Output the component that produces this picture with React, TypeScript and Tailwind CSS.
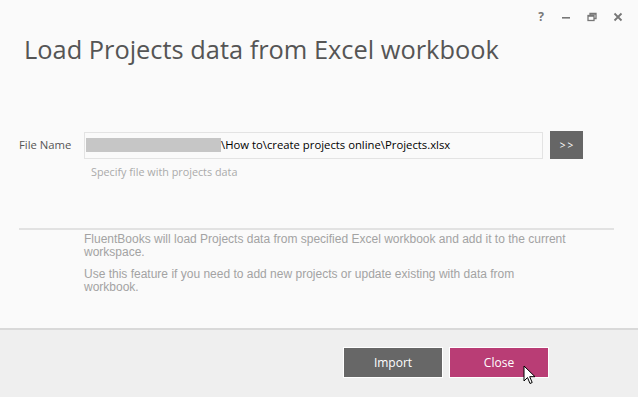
import React from "react";

export default function App() {
  return (
    <div className="w-[638px] h-[397px] flex flex-col bg-[#fafafa] overflow-hidden relative" style={{ fontFamily: '"Open Sans", sans-serif' }}>
      <div className="flex-1 flex flex-col relative">
        {/* window controls */}
        <div className="absolute top-[11px] right-[14px] flex items-center gap-[14px] text-[#777]">
          <span className="text-[12px] font-bold leading-none w-[10px] text-center">?</span>
          <svg width="12" height="12" viewBox="0 0 12 12"><rect x="2" y="6" width="8" height="1.6" fill="#777" /></svg>
          <svg width="12" height="12" viewBox="0 0 12 12" fill="none" stroke="#777" strokeWidth="1.3">
            <rect x="2" y="4.5" width="6" height="5" />
            <path d="M4 4.5V2.5h6v5H8" />
            <path d="M2 5.2h6M4 3.1h6" />
          </svg>
          <svg width="12" height="12" viewBox="0 0 12 12" stroke="#777" strokeWidth="1.8"><path d="M2.5 2.5l7 7M9.5 2.5l-7 7" /></svg>
        </div>
        <h1 className="pl-[24px] pt-[33px] text-[25.4px] leading-[32px] text-[#555] font-normal">
          Load Projects data from Excel workbook
        </h1>
        <div className="mt-[66px] flex items-center">
          <div className="w-[84px] pl-[19px] text-[11.3px] text-[#555]">File Name</div>
          <div className="w-[459px] h-[27px] border border-[#e3e3e3] bg-[#fafafa] flex items-center pl-[1px]">
            <div className="w-[135px] h-[14px] bg-[#c6c6c6]" />
            <span className="text-[11.3px] text-black leading-none">\How to\create projects online\Projects.xlsx</span>
          </div>
          <div className="ml-[7px] w-[33px] h-[28px] bg-[#666] text-white text-[10px] tracking-[2px] flex items-center justify-center pl-[2px]">&gt;&gt;</div>
        </div>
        <div className="pl-[91px] mt-[5px] text-[10.8px] text-[#aaa]">Specify file with projects data</div>
        <div className="mt-[48px] mx-[19px] w-[595px] h-[2px] bg-[#e2e2e2]" />
        <div className="pl-[84px] mt-[3px] text-[12px] leading-[13px] text-[#a3a3a3] whitespace-nowrap" style={{ fontFamily: '"Liberation Sans", Arial, sans-serif' }}>
          <p>FluentBooks will load Projects data from specified Excel workbook and add it to the current<br />workspace.</p>
          <p className="mt-[9px]">Use this feature if you need to add new projects or update existing with data from<br />workbook.</p>
        </div>
      </div>
      <div className="h-[69px] border-t-2 border-[#d9d9d9] bg-[#efefef] flex items-start justify-end pt-[17px] pr-[89px] gap-[6px]">
        <div className="w-[100px] h-[31px] bg-[#676767] border border-white text-white text-[12px] flex items-center justify-center">Import</div>
        <div className="w-[100px] h-[31px] bg-[#b93d75] border border-white text-white text-[12px] flex items-center justify-center">Close</div>
      </div>
      <svg className="absolute left-[523px] top-[365px]" width="14" height="21" viewBox="0 0 14 21">
        <path d="M1 1v15l3.5-3.5 2.5 6 2.2-1-2.5-5.8H12z" fill="white" stroke="black" strokeWidth="1" strokeLinejoin="round" />
      </svg>
    </div>
  );
}
